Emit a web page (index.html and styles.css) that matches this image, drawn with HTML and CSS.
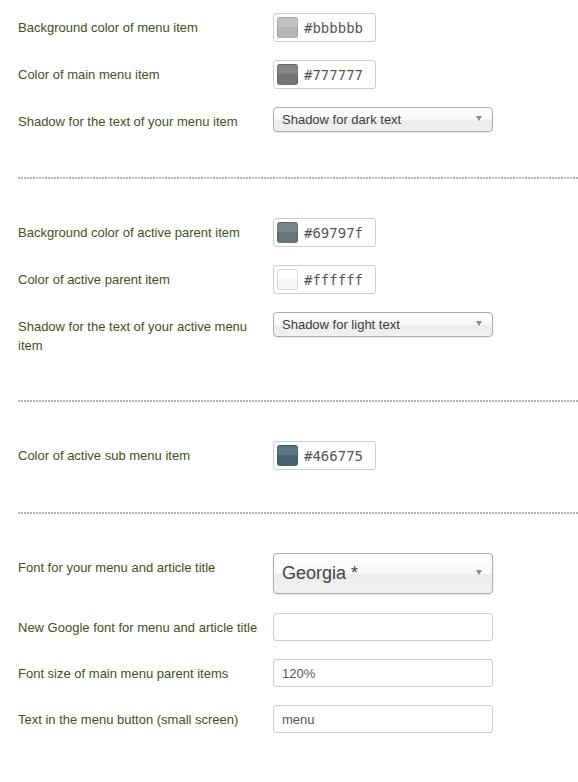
FILE: index.html
```html
<!DOCTYPE html>
<html>
<head>
<meta charset="utf-8">
<link rel="stylesheet" href="styles.css">
</head>
<body>
<div class="page">
  <div class="section">
    <div class="row">
      <label class="label">Background color of menu item</label>
      <div class="color-box"><span class="swatch" style="background-color:#bbbbbb"></span><span class="hex">#bbbbbb</span></div>
    </div>
    <div class="row">
      <label class="label">Color of main menu item</label>
      <div class="color-box"><span class="swatch" style="background-color:#777777"></span><span class="hex">#777777</span></div>
    </div>
    <div class="row">
      <label class="label">Shadow for the text of your menu item</label>
      <div class="select"><span>Shadow for dark text</span><span class="arrow"></span></div>
    </div>
  </div>
  <div class="divider"></div>
  <div class="section">
    <div class="row">
      <label class="label">Background color of active parent item</label>
      <div class="color-box"><span class="swatch" style="background-color:#69797f"></span><span class="hex">#69797f</span></div>
    </div>
    <div class="row">
      <label class="label">Color of active parent item</label>
      <div class="color-box"><span class="swatch" style="background-color:#ffffff"></span><span class="hex">#ffffff</span></div>
    </div>
    <div class="row">
      <label class="label">Shadow for the text of your active menu item</label>
      <div class="select"><span>Shadow for light text</span><span class="arrow"></span></div>
    </div>
  </div>
  <div class="divider"></div>
  <div class="section">
    <div class="row">
      <label class="label">Color of active sub menu item</label>
      <div class="color-box"><span class="swatch" style="background-color:#466775"></span><span class="hex">#466775</span></div>
    </div>
  </div>
  <div class="divider divider-tight"></div>
  <div class="section">
    <div class="row row-big">
      <label class="label">Font for your menu and article title</label>
      <div class="select select-big"><span>Georgia *</span><span class="arrow"></span></div>
    </div>
    <div class="row">
      <label class="label">New Google font for menu and article title</label>
      <div class="text-input"></div>
    </div>
    <div class="row">
      <label class="label">Font size of main menu parent items</label>
      <div class="text-input">120%</div>
    </div>
    <div class="row">
      <label class="label">Text in the menu button (small screen)</label>
      <div class="text-input">menu</div>
    </div>
  </div>
</div>
</body>
</html>
```

FILE: styles.css
```css
html, body {
  margin: 0;
  padding: 0;
  background: #ffffff;
  overflow: hidden;
}

.page {
  padding: 13px 0 0 18px;
  font-family: "Liberation Sans", Arial, sans-serif;
}

.section {
  display: flex;
  flex-direction: column;
}

.row {
  display: flex;
  align-items: flex-start;
  margin-bottom: 18px;
}

.row-big {
  margin-bottom: 19px;
}

.label {
  width: 255px;
  flex: none;
  padding-top: 5px;
  font-size: 13px;
  line-height: 19px;
  color: #3f501c;
}

.color-box {
  box-sizing: border-box;
  width: 103px;
  height: 29px;
  border: 1px solid #cfcfcf;
  border-radius: 3px;
  background: #fff;
  display: flex;
  align-items: center;
  padding-left: 3px;
}

.swatch {
  box-sizing: border-box;
  width: 21px;
  height: 21px;
  border-radius: 3px;
  border: 1px solid rgba(0, 0, 0, 0.12);
  background-image: linear-gradient(rgba(255, 255, 255, 0.1) 50%, rgba(0, 0, 0, 0.03) 50%);
}

.hex {
  margin-left: 6px;
  font-family: "DejaVu Sans Mono", monospace;
  font-size: 14px;
  color: #555;
}

.select {
  box-sizing: border-box;
  width: 220px;
  height: 25px;
  border: 1px solid #ababab;
  border-radius: 4px;
  background: linear-gradient(#ffffff 0%, #f7f7f7 50%, #ececec 52%, #f1f1f1 100%);
  box-shadow: 0 1px 1px rgba(0, 0, 0, 0.08);
  display: flex;
  align-items: center;
  justify-content: space-between;
  padding: 0 10px 0 8px;
  font-size: 13px;
  color: #3a3a3a;
}

.select-big {
  height: 41px;
  font-size: 18px;
  color: #444;
  box-shadow: 0 1px 2px rgba(0, 0, 0, 0.12);
}

.arrow {
  width: 0;
  height: 0;
  border-left: 3.5px solid transparent;
  border-right: 3.5px solid transparent;
  border-top: 5px solid #8a8a8a;
  margin-top: -2px;
}

.text-input {
  box-sizing: border-box;
  width: 220px;
  height: 28px;
  border: 1px solid #cdcdcd;
  border-radius: 3px;
  background: #fff;
  padding-left: 8px;
  display: flex;
  align-items: center;
  font-size: 13px;
  color: #555;
}

.divider {
  height: 2px;
  margin: 27px 0 39px 0;
  background-image: linear-gradient(to right, #b4b4b4 2px, transparent 2px);
  background-size: 3px 2px;
  background-repeat: repeat-x;
}

.divider-tight {
  margin-top: 24px;
}
```
